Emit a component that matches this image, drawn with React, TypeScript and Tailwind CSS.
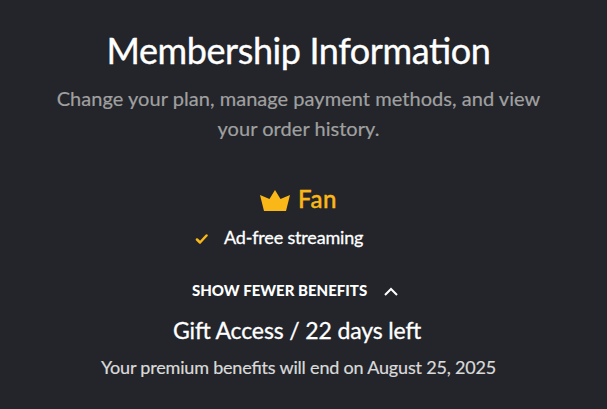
export default function App() {
  return (
    <main className="flex h-[409px] w-[607px] flex-col items-center overflow-hidden bg-[#23252b] pr-2.5 font-['Lato',sans-serif] text-white [font-feature-settings:'liga'_1]">
      <h1 className="mt-7 text-[36px] leading-[44px] tracking-[-0.4px] whitespace-nowrap [-webkit-text-stroke:0.35px_currentColor]">Membership Information</h1>
      <p className="mt-[11px] text-center text-[20px] leading-[30px] tracking-[0.04px] text-[#a0a0a0] [-webkit-text-stroke:0.2px_currentColor]">
        Change your plan, manage payment methods, and view
        <br />
        your order history.
      </p>
      <section className="mt-10 flex w-full flex-col">
        <div className="ml-[260px] flex h-8 items-center gap-2 text-[#fab818]">
          <svg width="30" height="21" viewBox="0 0 30 21" fill="currentColor" className="mt-[3px]">
            <path d="M0 5l9.500 4L15 0l5.500 9L30 5l-4 16H4z" />
          </svg>
          <h2 className="text-[24px] leading-8 font-medium tracking-[0.5px] [-webkit-text-stroke:0.4px_currentColor]">Fan</h2>
        </div>
        <div className="mt-2.5 ml-[195px] flex h-6 items-center gap-4">
          <svg width="13" height="12" viewBox="0 0 13 12" fill="none" stroke="#fab818" strokeWidth="2.500" strokeLinecap="round" strokeLinejoin="round" className="mt-[3px]">
            <path d="M2 6.500l3 3 6.500-7" />
          </svg>
          <span className="text-[18px] leading-6 tracking-[-0.18px] [-webkit-text-stroke:0.3px_currentColor]">Ad-free streaming</span>
        </div>
      </section>
      <button className="mt-[29px] ml-[192px] flex h-6 items-center gap-[17px] self-start text-[15px] font-black whitespace-nowrap">
        SHOW FEWER BENEFITS
        <svg width="14" height="9" viewBox="0 0 14 9" fill="none" stroke="currentColor" strokeWidth="2" className="mt-0.5">
          <path d="M1 8l6-6 6 6" />
        </svg>
      </button>
      <h3 className="mt-3 mr-[3px] text-[23px] leading-8 tracking-[-0.14px] [-webkit-text-stroke:0.3px_currentColor]">Gift Access / 22 days left</h3>
      <p className="mt-[7px] text-[18px] leading-7 tracking-[-0.19px] text-[#dadada] [-webkit-text-stroke:0.2px_currentColor]">Your premium benefits will end on August 25, 2025</p>
    </main>
  );
}
